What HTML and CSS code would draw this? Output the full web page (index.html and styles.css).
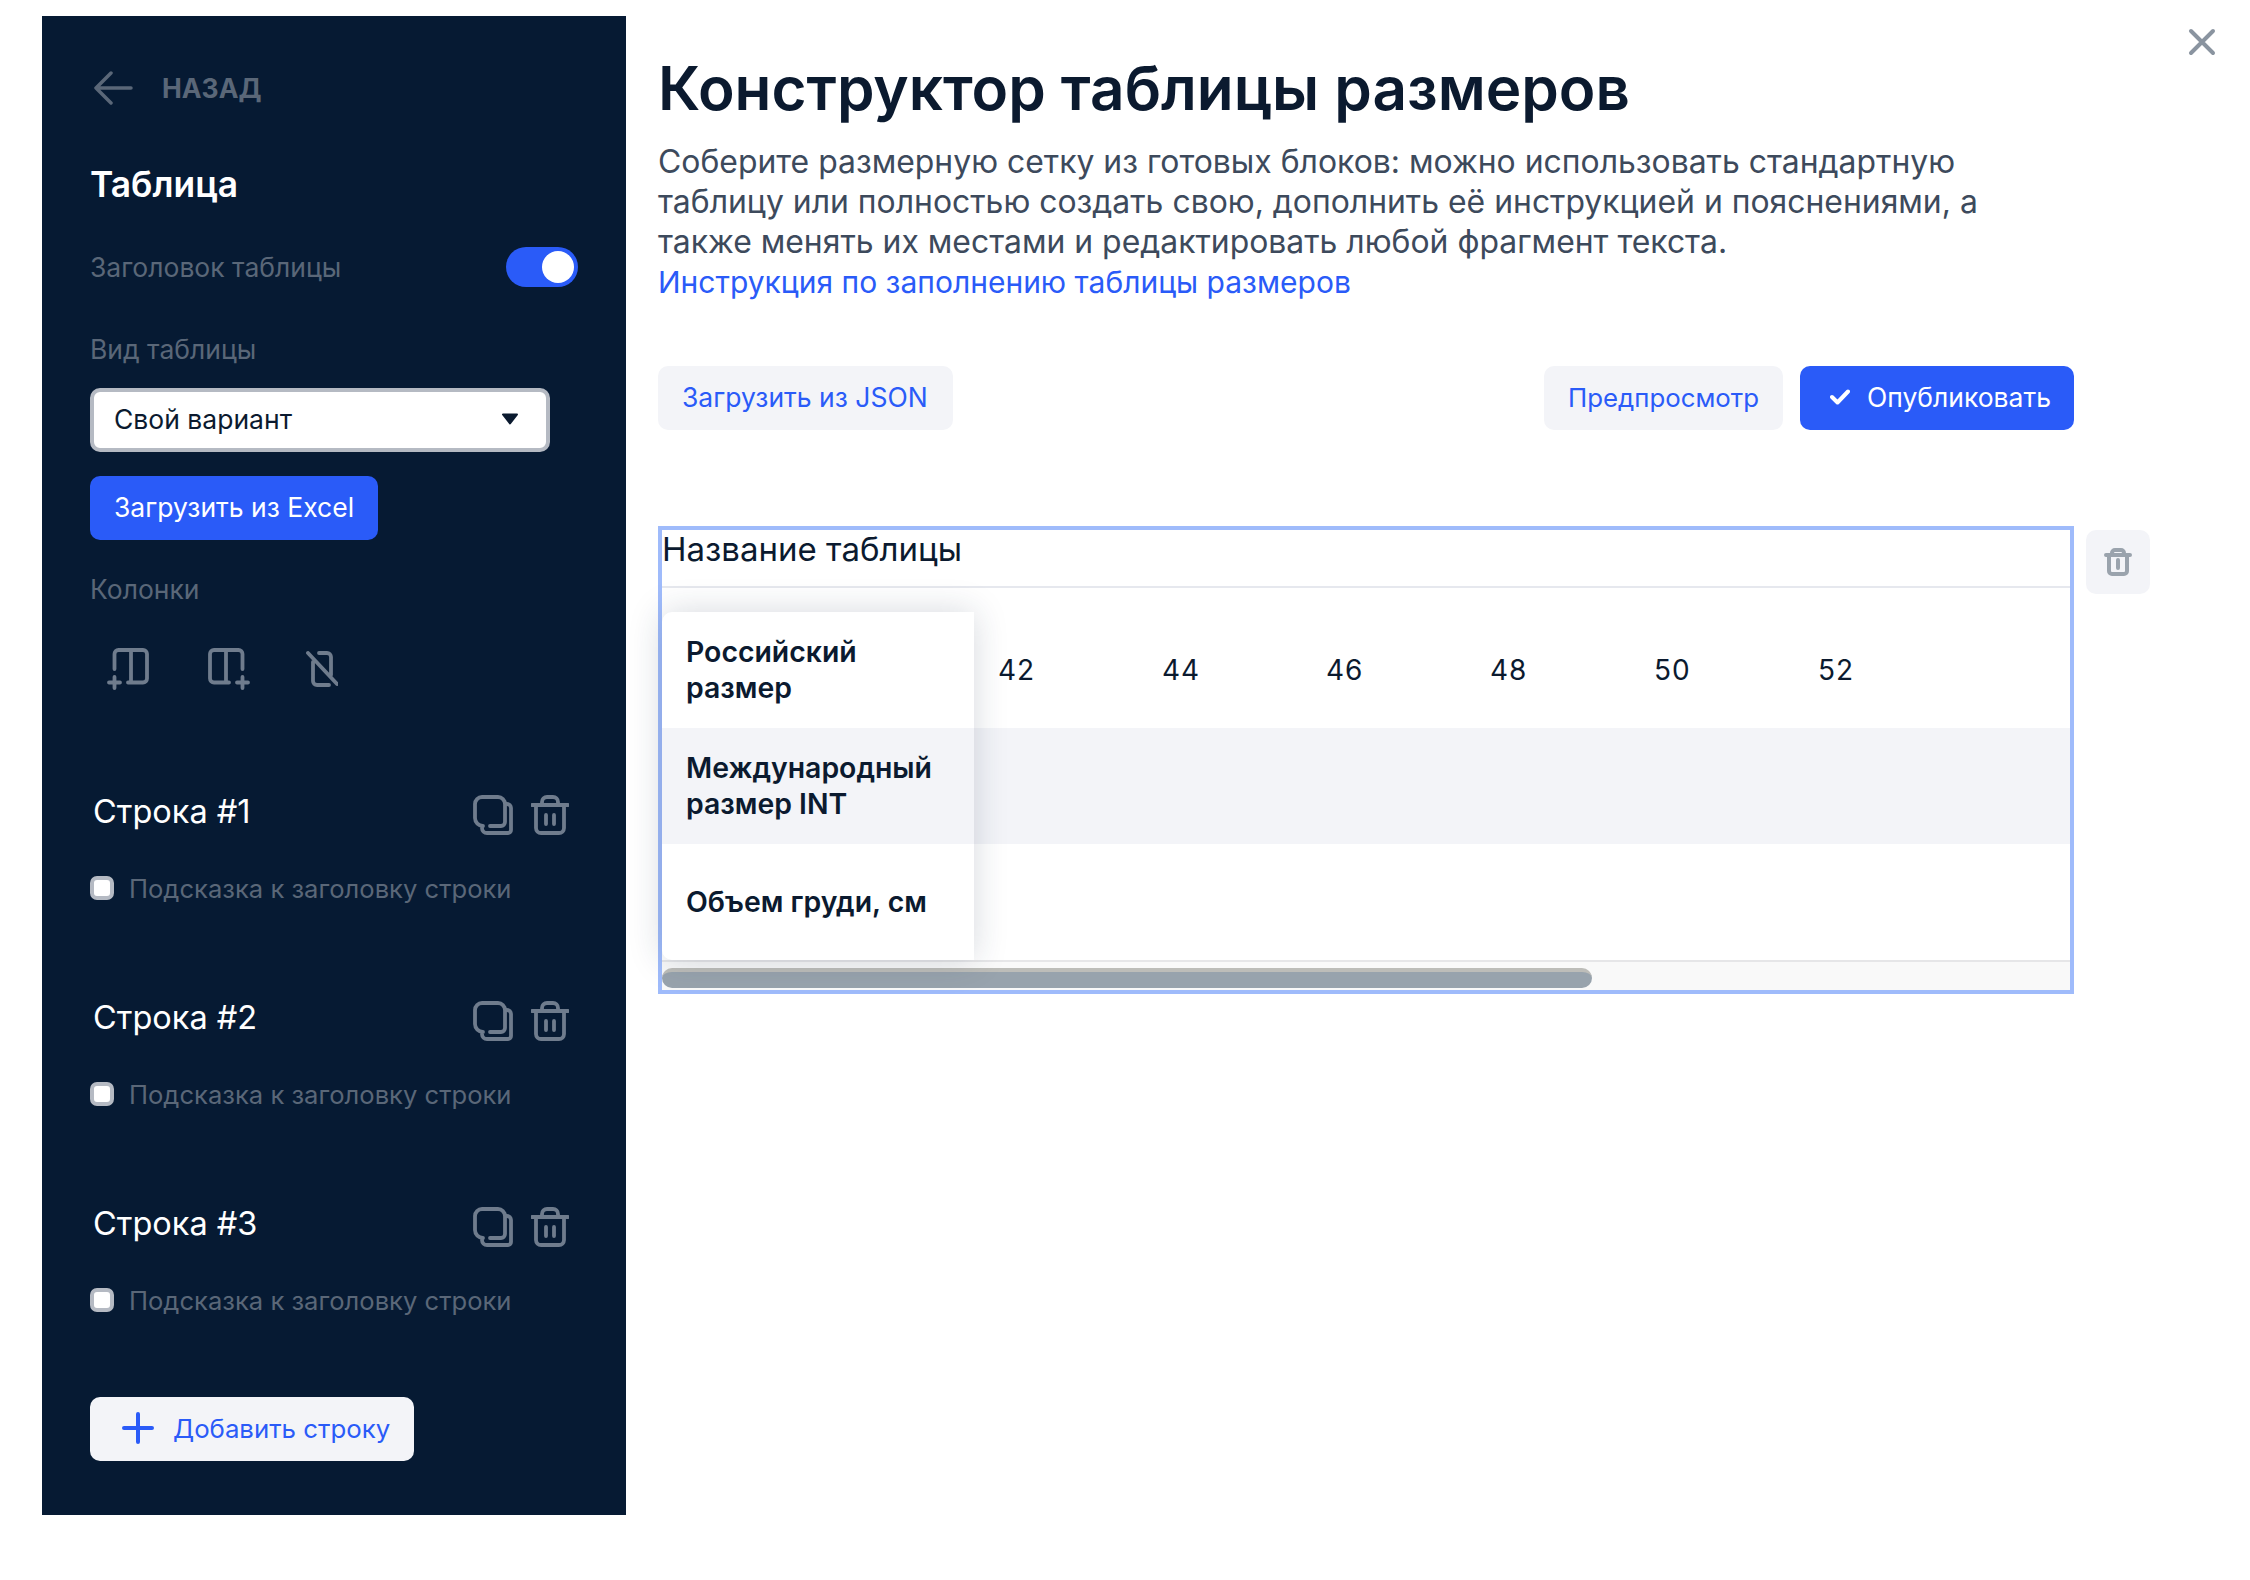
FILE: index.html
```html
<!DOCTYPE html>
<html lang="ru">
  <head>
    <title>Конструктор таблицы размеров</title>
    <meta http-equiv="Content-Type" content="text/html; charset=UTF-8"/>
    <link rel="stylesheet" href="styles.css">
  </head>
  <body>
    <svg class="close-icon" viewBox="0 0 28 28"><path d="M3 3 L25 25 M25 3 L3 25"/></svg>

    <aside class="sidebar">
      <div class="back">
        <svg class="back-arrow" viewBox="0 0 40 34"><path d="M38 17 H3 M18 2 L3 17 L18 32"/></svg>
        <span>НАЗАД</span>
      </div>

      <h2 class="side-title">Таблица</h2>

      <div class="toggle-row">
        <span class="muted">Заголовок таблицы</span>
        <span class="toggle"><span class="toggle-knob"></span></span>
      </div>

      <div class="muted type-label">Вид таблицы</div>
      <div class="select">
        <span>Свой вариант</span>
        <svg class="select-arrow" viewBox="0 0 18 12"><path d="M2 1.5 H16 L9 10.5 Z"/></svg>
      </div>
      <button class="btn btn-primary excel-btn">Загрузить из Excel</button>

      <div class="muted columns-label">Колонки</div>
      <div class="column-tools">
        <svg class="tool-add-left" viewBox="0 0 42 42"><path d="M7.5 21 V6 a4 4 0 0 1 4-4 H36 a4 4 0 0 1 4 4 V30.5 a4 4 0 0 1-4 4 H21 M24 2 V34.5 M2 34.5 H13 M7.5 29 V40"/></svg>
        <svg class="tool-add-right" viewBox="0 0 42 42"><path d="M34.5 21 V6 a4 4 0 0 0-4-4 H6 a4 4 0 0 0-4 4 V30.5 a4 4 0 0 0 4 4 H21 M18 2 V34.5 M40 34.5 H29 M34.5 29 V40"/></svg>
        <svg class="tool-remove" viewBox="0 0 32 36"><path d="M13 2 H21 a4 4 0 0 1 4 4 V24 M23 34 H11 a4 4 0 0 1-4-4 V11 M2 2 L31 33"/></svg>
      </div>

      <section class="row-block">
        <div class="row-head">
          <span class="row-name">Строка #1</span>
          <svg class="icon-copy" viewBox="0 0 40 40"><path d="M10 31 a8 8 0 0 1-8-8 V9 a7 7 0 0 1 7-7 H25 a7 7 0 0 1 7 7 V27 a4 4 0 0 1-4 4 H17 M33 9 h1 a4 4 0 0 1 4 4 V35 a3 3 0 0 1-3 3 H14 a5 5 0 0 1-5-5"/></svg>
          <svg class="icon-trash" viewBox="0 0 38 40"><path d="M1 10 H37 M11 9 V7 a5 5 0 0 1 5-5 H22 a5 5 0 0 1 5 5 V9 M5 10 V33 a5 5 0 0 0 5 5 H28 a5 5 0 0 0 5-5 V10 M15 20 V29 M23 20 V29"/></svg>
        </div>
        <label class="hint"><span class="checkbox"></span>Подсказка к заголовку строки</label>
      </section>

      <section class="row-block">
        <div class="row-head">
          <span class="row-name">Строка #2</span>
          <svg class="icon-copy" viewBox="0 0 40 40"><path d="M10 31 a8 8 0 0 1-8-8 V9 a7 7 0 0 1 7-7 H25 a7 7 0 0 1 7 7 V27 a4 4 0 0 1-4 4 H17 M33 9 h1 a4 4 0 0 1 4 4 V35 a3 3 0 0 1-3 3 H14 a5 5 0 0 1-5-5"/></svg>
          <svg class="icon-trash" viewBox="0 0 38 40"><path d="M1 10 H37 M11 9 V7 a5 5 0 0 1 5-5 H22 a5 5 0 0 1 5 5 V9 M5 10 V33 a5 5 0 0 0 5 5 H28 a5 5 0 0 0 5-5 V10 M15 20 V29 M23 20 V29"/></svg>
        </div>
        <label class="hint"><span class="checkbox"></span>Подсказка к заголовку строки</label>
      </section>

      <section class="row-block">
        <div class="row-head">
          <span class="row-name">Строка #3</span>
          <svg class="icon-copy" viewBox="0 0 40 40"><path d="M10 31 a8 8 0 0 1-8-8 V9 a7 7 0 0 1 7-7 H25 a7 7 0 0 1 7 7 V27 a4 4 0 0 1-4 4 H17 M33 9 h1 a4 4 0 0 1 4 4 V35 a3 3 0 0 1-3 3 H14 a5 5 0 0 1-5-5"/></svg>
          <svg class="icon-trash" viewBox="0 0 38 40"><path d="M1 10 H37 M11 9 V7 a5 5 0 0 1 5-5 H22 a5 5 0 0 1 5 5 V9 M5 10 V33 a5 5 0 0 0 5 5 H28 a5 5 0 0 0 5-5 V10 M15 20 V29 M23 20 V29"/></svg>
        </div>
        <label class="hint"><span class="checkbox"></span>Подсказка к заголовку строки</label>
      </section>

      <button class="btn btn-light add-row">
        <svg class="plus-icon" viewBox="0 0 32 32"><path d="M16 2 V30 M2 16 H30"/></svg>
        Добавить строку
      </button>
    </aside>

    <main class="main">
      <h1 class="title">Конструктор таблицы размеров</h1>
      <p class="lead">
        Соберите размерную сетку из готовых блоков: можно использовать стандартную
        таблицу или полностью создать свою, дополнить её инструкцией и пояснениями, а
        также менять их местами и редактировать любой фрагмент текста.<br>
        <a href="#">Инструкция по заполнению таблицы размеров</a>
      </p>

      <div class="actions">
        <button class="btn btn-light json-btn">Загрузить из JSON</button>
        <div class="actions-right">
          <button class="btn btn-light preview">Предпросмотр</button>
          <button class="btn btn-primary publish">
            <svg class="check-icon" viewBox="0 0 20 16"><path d="M2 8 L7.5 13.5 L18 2.5"/></svg>
            Опубликовать
          </button>
        </div>
      </div>

      <div class="editor">
        <div class="table-box">
          <div class="table-name">Название таблицы</div>
          <div class="table-grid">
            <div class="head-col">
              <div class="cell head-cell">Российский<br>размер</div>
              <div class="cell head-cell shaded">Международный<br>размер INT</div>
              <div class="cell head-cell">Объем груди, см</div>
            </div>
            <div class="body-col">
              <div class="cell sizes">
                <span>42</span><span>44</span><span>46</span><span>48</span><span>50</span><span>52</span>
              </div>
              <div class="cell shaded"></div>
              <div class="cell"></div>
            </div>
          </div>
          <div class="scroll-track"><div class="scroll-thumb" style="width: 930px"></div></div>
        </div>
        <button class="remove-table">
          <svg class="trash-small" viewBox="0 0 28 28"><path d="M2 7 H26 M8 6 V5 a3 3 0 0 1 3-3 H17 a3 3 0 0 1 3 3 V6 M5 7 V23 a3 3 0 0 0 3 3 H20 a3 3 0 0 0 3-3 V7 M14 12 V20"/></svg>
        </button>
      </div>
    </main>
  </body>
</html>
```

FILE: styles.css
```css
* {
  box-sizing: border-box;
}

body {
  display: flex;
  align-items: flex-start;
  width: 2250px;
  min-height: 1580px;
  margin: 0;
  padding: 16px 0 0 42px;
  background: #fff;
  color: #0b1a2f;
  font-family: 'Inter', 'Noto Sans', sans-serif;
  font-size: 26.5px;
}

svg {
  display: block;
  flex: none;
  fill: none;
  stroke-linecap: round;
  stroke-linejoin: round;
}

.close-icon {
  position: absolute;
  top: 28px;
  right: 34px;
  width: 28px;
  height: 28px;
  stroke: #8a94a0;
  stroke-width: 4;
}

/* buttons */
.btn {
  display: inline-flex;
  align-items: center;
  height: 64px;
  padding: 0 24px 2px;
  border: 0;
  border-radius: 10px;
  font-family: inherit;
  font-size: 26.5px;
}

.btn-primary {
  background: #2a5bf8;
  color: #fff;
}

.btn-light {
  background: #f3f4f8;
  color: #2a5bf8;
}

/* left panel */
.sidebar {
  display: flex;
  flex-direction: column;
  align-items: flex-start;
  flex: none;
  width: 584px;
  height: 1499px;
  padding: 51px 48px 0;
  background: #061a33;
  color: #fff;
}

.muted {
  color: #5a6778;
  line-height: 40px;
}

.back {
  display: flex;
  align-items: center;
  gap: 29px;
  height: 42px;
  padding-left: 3px;
  color: #5a6778;
  font-size: 26.5px;
  font-weight: 700;
}

.back-arrow {
  width: 40px;
  height: 34px;
  stroke: #5a6778;
  stroke-width: 3.5;
}

.side-title {
  margin: 54px 0 0;
  font-size: 35.4px;
  font-weight: 600;
  line-height: 44px;
}

.toggle-row {
  display: flex;
  align-items: center;
  justify-content: space-between;
  width: 488px;
  height: 40px;
  margin-top: 40px;
}

.toggle {
  display: flex;
  align-items: center;
  justify-content: flex-end;
  width: 72px;
  height: 40px;
  padding-right: 4px;
  border-radius: 20px;
  background: #2a5bf8;
}

.toggle-knob {
  width: 32px;
  height: 32px;
  border-radius: 50%;
  background: #fff;
}

.type-label {
  margin-top: 42px;
}

.select {
  display: flex;
  align-items: center;
  justify-content: space-between;
  width: 460px;
  height: 64px;
  margin-top: 19px;
  padding: 0 27px 2px 20px;
  border: 4px solid #b5bac3;
  border-radius: 10px;
  background: #fff;
  color: #0b1a2f;
}

.select-arrow {
  width: 18px;
  height: 12px;
  fill: #0b1a2f;
  stroke: #0b1a2f;
  stroke-width: 2;
}

.excel-btn {
  margin-top: 24px;
}

.columns-label {
  margin-top: 29px;
}

.column-tools {
  display: flex;
  align-items: center;
  height: 44px;
  margin-top: 38px;
  padding-left: 17px;
  stroke: #6f7c8d;
  stroke-width: 3.8;
}

.tool-add-left,
.tool-add-right {
  width: 42px;
  height: 42px;
}

.tool-add-right {
  margin-left: 59px;
}

.tool-remove {
  width: 32px;
  height: 36px;
  margin-left: 56px;
}

.row-block {
  width: 479px;
  margin-top: 92px;
}

.column-tools + .row-block {
  margin-top: 103px;
}

.row-head {
  display: flex;
  align-items: center;
  height: 41px;
  stroke: #6f7c8d;
  stroke-width: 3.8;
}

.row-name {
  flex: 1;
  margin-bottom: 7px;
  padding-left: 3px;
  font-size: 32.5px;
}

.icon-copy {
  width: 40px;
  height: 40px;
}

.icon-trash {
  width: 38px;
  height: 40px;
  margin-left: 18px;
}

.hint {
  display: flex;
  align-items: center;
  gap: 15px;
  height: 40px;
  margin-top: 33px;
  color: #5a6778;
  font-size: 25.6px;
}

.checkbox {
  flex: none;
  width: 24px;
  height: 24px;
  border: 4px solid #b5bac3;
  border-radius: 7px;
  background: #fff;
}

.add-row {
  gap: 19px;
  margin-top: 77px;
  padding: 0 24px 2px 32px;
  background: #f3f4f8;
  font-size: 25.8px;
}

.plus-icon {
  width: 32px;
  height: 32px;
  stroke: #2a5bf8;
  stroke-width: 4;
}

/* main column */
.main {
  flex: 1;
  padding: 37px 0 0 32px;
}

.title {
  margin: 0;
  color: #0b1a2f;
  font-size: 60.2px;
  font-weight: 600;
  line-height: 72px;
}

.lead {
  max-width: 1370px;
  margin: 17px 0 0;
  color: #3d4a5c;
  font-size: 31.9px;
  line-height: 40px;
}

.lead a {
  color: #2a5bf8;
  font-size: 30px;
  text-decoration: none;
}

.actions {
  display: flex;
  justify-content: space-between;
  width: 1416px;
  margin-top: 64px;
}

.actions-right {
  display: flex;
  gap: 17px;
}

.json-btn {
  padding-right: 25px;
}

.preview {
  font-size: 25.8px;
}

.publish {
  gap: 17px;
  padding: 0 23px 2px 30px;
}

.check-icon {
  width: 20px;
  height: 16px;
  stroke: #fff;
  stroke-width: 4;
}

.editor {
  display: flex;
  align-items: flex-start;
  gap: 12px;
  margin-top: 96px;
}

.table-box {
  flex: none;
  width: 1416px;
  height: 468px;
  border: 4px solid #9fbbfb;
}

.table-name {
  height: 58px;
  border-bottom: 2px solid #e6e8ee;
  color: #0b1a2f;
  font-size: 33px;
  line-height: 38px;
}

.table-grid {
  display: flex;
  margin-top: 24px;
  border-bottom: 2px solid #e6e6e8;
}

.head-col {
  position: relative;
  z-index: 1;
  flex: none;
  width: 312px;
  border-radius: 10px 0 0 10px;
  background: #fff;
  box-shadow: 0 0 34px rgba(30, 45, 70, 0.18);
}

.body-col {
  flex: 1;
}

.cell {
  display: flex;
  align-items: center;
  height: 116px;
}

.head-cell {
  padding-left: 24px;
  font-size: 28.4px;
  font-weight: 600;
  line-height: 36px;
}

.head-cell:first-child {
  border-top-left-radius: 10px;
}

.head-cell:last-child {
  border-bottom-left-radius: 10px;
}

.shaded {
  background: #f3f4f8;
}

.sizes {
  padding-left: 24px;
  font-size: 28px;
  letter-spacing: 1px;
}

.sizes span {
  width: 164px;
}

.scroll-track {
  height: 28px;
  padding-top: 6px;
  background: #f9f9f9;
}

.scroll-thumb {
  height: 20px;
  border-top: 4px solid #bdbdb9;
  border-radius: 10px;
  background: #98a3ad;
}

.remove-table {
  display: flex;
  align-items: center;
  justify-content: center;
  flex: none;
  width: 64px;
  height: 64px;
  margin-top: 4px;
  padding: 0;
  border: 0;
  border-radius: 10px;
  background: #f3f4f8;
}

.trash-small {
  width: 28px;
  height: 28px;
  stroke: #9aa3ad;
  stroke-width: 4;
}
```
